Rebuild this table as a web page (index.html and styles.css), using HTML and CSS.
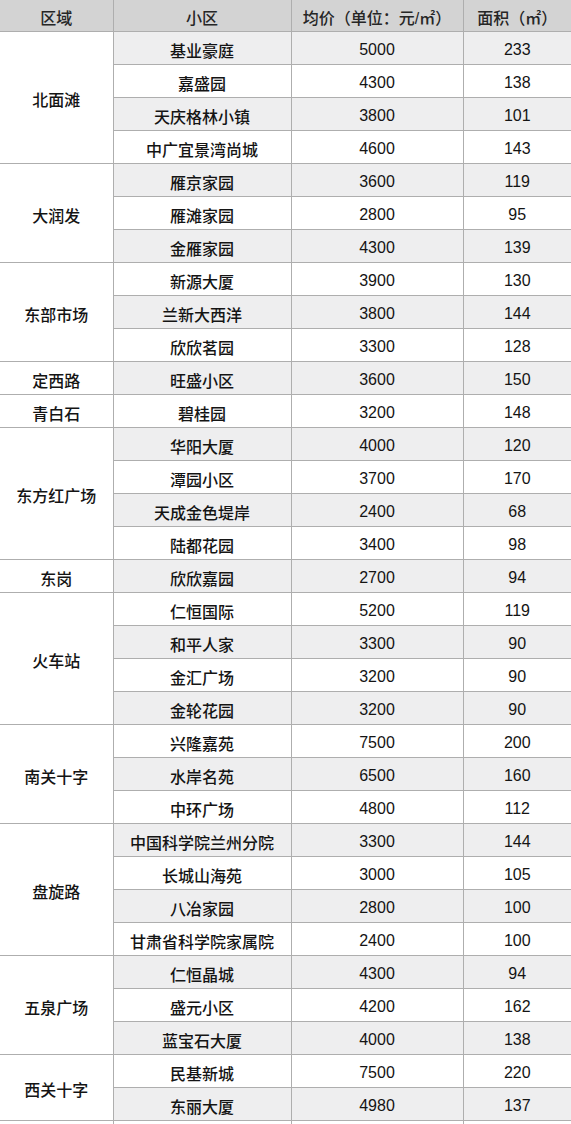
FILE: index.html
```html
<!DOCTYPE html>
<html lang="zh">
<head>
<meta charset="utf-8">
<link rel="stylesheet" href="styles.css">
</head>
<body>
<table class="price-table">
<colgroup>
<col class="c-area"><col class="c-name"><col class="c-price"><col class="c-size">
</colgroup>
<thead>
<tr><th>区域</th><th>小区</th><th>均价（单位：元/㎡）</th><th>面积（㎡）</th></tr>
</thead>
<tbody>
<tr class="odd"><td class="area" rowspan="4">北面滩</td><td>基业豪庭</td><td>5000</td><td>233</td></tr>
<tr><td>嘉盛园</td><td>4300</td><td>138</td></tr>
<tr class="odd"><td>天庆格林小镇</td><td>3800</td><td>101</td></tr>
<tr><td>中广宜景湾尚城</td><td>4600</td><td>143</td></tr>
<tr class="odd"><td class="area" rowspan="3">大润发</td><td>雁京家园</td><td>3600</td><td>119</td></tr>
<tr><td>雁滩家园</td><td>2800</td><td>95</td></tr>
<tr class="odd"><td>金雁家园</td><td>4300</td><td>139</td></tr>
<tr><td class="area" rowspan="3">东部市场</td><td>新源大厦</td><td>3900</td><td>130</td></tr>
<tr class="odd"><td>兰新大西洋</td><td>3800</td><td>144</td></tr>
<tr><td>欣欣茗园</td><td>3300</td><td>128</td></tr>
<tr class="odd"><td class="area">定西路</td><td>旺盛小区</td><td>3600</td><td>150</td></tr>
<tr><td class="area">青白石</td><td>碧桂园</td><td>3200</td><td>148</td></tr>
<tr class="odd"><td class="area" rowspan="4">东方红广场</td><td>华阳大厦</td><td>4000</td><td>120</td></tr>
<tr><td>潭园小区</td><td>3700</td><td>170</td></tr>
<tr class="odd"><td>天成金色堤岸</td><td>2400</td><td>68</td></tr>
<tr><td>陆都花园</td><td>3400</td><td>98</td></tr>
<tr class="odd"><td class="area">东岗</td><td>欣欣嘉园</td><td>2700</td><td>94</td></tr>
<tr><td class="area" rowspan="4">火车站</td><td>仁恒国际</td><td>5200</td><td>119</td></tr>
<tr class="odd"><td>和平人家</td><td>3300</td><td>90</td></tr>
<tr><td>金汇广场</td><td>3200</td><td>90</td></tr>
<tr class="odd"><td>金轮花园</td><td>3200</td><td>90</td></tr>
<tr><td class="area" rowspan="3">南关十字</td><td>兴隆嘉苑</td><td>7500</td><td>200</td></tr>
<tr class="odd"><td>水岸名苑</td><td>6500</td><td>160</td></tr>
<tr><td>中环广场</td><td>4800</td><td>112</td></tr>
<tr class="odd"><td class="area" rowspan="4">盘旋路</td><td>中国科学院兰州分院</td><td>3300</td><td>144</td></tr>
<tr><td>长城山海苑</td><td>3000</td><td>105</td></tr>
<tr class="odd"><td>八冶家园</td><td>2800</td><td>100</td></tr>
<tr><td>甘肃省科学院家属院</td><td>2400</td><td>100</td></tr>
<tr class="odd"><td class="area" rowspan="3">五泉广场</td><td>仁恒晶城</td><td>4300</td><td>94</td></tr>
<tr><td>盛元小区</td><td>4200</td><td>162</td></tr>
<tr class="odd"><td>蓝宝石大厦</td><td>4000</td><td>138</td></tr>
<tr><td class="area" rowspan="2">西关十字</td><td>民基新城</td><td>7500</td><td>220</td></tr>
<tr class="odd"><td>东丽大厦</td><td>4980</td><td>137</td></tr>
<tr><td class="area">&nbsp;</td><td>&nbsp;</td><td>&nbsp;</td><td>&nbsp;</td></tr>
</tbody>
</table>
</body>
</html>
```

FILE: styles.css
```css
html, body {
  margin: 0;
  padding: 0;
  background: #ffffff;
}
body {
  width: 571px;
  height: 1124px;
  overflow: hidden;
}
.price-table {
  width: 571px;
  border-collapse: collapse;
  table-layout: fixed;
  font-family: "Liberation Sans", "Noto Sans CJK SC", sans-serif;
  font-size: 16px;
  font-weight: 500;
  color: #141414;
}
.c-area { width: 113px; }
.c-name { width: 178px; }
.c-price { width: 172px; }
.c-size { width: 108px; }
.price-table th,
.price-table td {
  border: 1px solid #aeaeae;
  text-align: center;
  vertical-align: middle;
  white-space: nowrap;
  overflow: hidden;
}
.price-table tr > :first-child { border-left: none; }
.price-table tr > :last-child { border-right: none; }
.price-table th {
  height: 29px;
  padding: 2px 0 0;
  border-top: none;
  background: #d3d3d3;
  font-weight: 500;
  color: #262626;
}
.price-table td {
  height: 29px;
  padding: 3px 0 0;
  background: #ffffff;
}
.price-table tr.odd td {
  background: #eeeeef;
}
.price-table tr.odd td.area,
.price-table td.area {
  background: #ffffff;
  border-left: none;
}
```
